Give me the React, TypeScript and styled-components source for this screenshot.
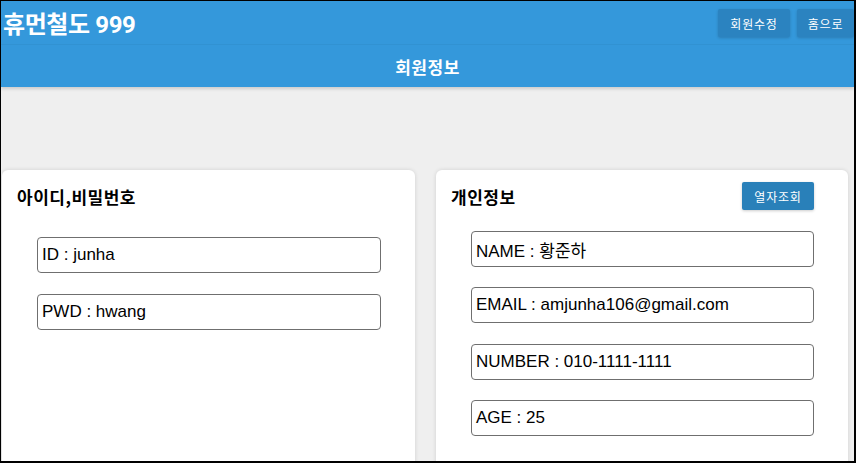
import React from "react";
import styled, { createGlobalStyle } from "styled-components";

const GlobalStyle = createGlobalStyle`
  html, body { margin: 0; padding: 0; background: #ffffff; }
  * { box-sizing: border-box; }
`;

const Frame = styled.div`
  width: 856px;
  height: 463px;
  border-style: solid;
  border-color: #000;
  border-width: 1px 2px 2px 1px;
  background: #efefef;
  overflow: hidden;
  display: flex;
  flex-direction: column;
  font-family: "Liberation Sans", "Noto Sans CJK KR", sans-serif;
`;

const Header = styled.header`
  background: #3498db;
  box-shadow: 0 2px 3px rgba(0, 0, 0, 0.15);
  position: relative;
  z-index: 1;
  flex-shrink: 0;
`;

const TopBar = styled.div`
  height: 44px;
  display: flex;
  align-items: center;
  justify-content: space-between;
  padding: 0 0 0 2px;
  border-bottom: 1px solid rgba(0, 0, 0, 0.04);
`;

const Brand = styled.h1`
  margin: 0;
  color: #fff;
  font-family: "Roboto", "Noto Sans CJK KR", sans-serif;
  font-size: 24px;
  font-weight: 700;
  letter-spacing: -0.4px;
`;

const NavButtons = styled.div`
  display: flex;
  gap: 7px;
  align-self: flex-start;
  margin-top: 8px;
`;

const NavButton = styled.button<{ $w: number }>`
  width: ${(p) => p.$w}px;
  height: 28px;
  border: none;
  border-radius: 2px;
  background: #2b83c0;
  color: #fff;
  font-family: "Noto Sans CJK KR", sans-serif;
  font-size: 12px;
  letter-spacing: 0.8px;
  box-shadow: 0 1px 3px rgba(0, 0, 0, 0.18);
  padding: 0;
  cursor: pointer;
`;

const SubBar = styled.div`
  height: 42px;
  display: flex;
  align-items: center;
  justify-content: center;
  color: #fff;
  font-family: "Noto Sans CJK KR", sans-serif;
  font-size: 17px;
  font-weight: 700;
  letter-spacing: 0.5px;
`;

const Main = styled.main`
  flex: 1;
  display: grid;
  grid-template-columns: 413px 412px;
  column-gap: 21px;
  padding: 83px 0 0 1px;
`;

const Card = styled.section`
  background: #fff;
  border-radius: 6px;
  box-shadow: 0 0 4px rgba(0, 0, 0, 0.13);
  height: 320px;
  padding: 12px 34px 0 15px;
`;

const CardHead = styled.div`
  height: 28px;
  display: flex;
  align-items: center;
  justify-content: space-between;
`;

const CardTitle = styled.h2`
  margin: 0;
  font-family: "Noto Sans CJK KR", sans-serif;
  font-size: 17px;
  font-weight: 700;
  letter-spacing: 0.5px;
  color: #000;
`;

const ActionButton = styled.button`
  width: 72px;
  height: 28px;
  border: none;
  border-radius: 2px;
  background: #2980b9;
  color: #fff;
  font-family: "Noto Sans CJK KR", sans-serif;
  font-size: 12px;
  letter-spacing: 0.8px;
  box-shadow: 0 1px 3px rgba(0, 0, 0, 0.2);
  padding: 0;
`;

const FieldList = styled.div<{ $top: number; $gap: number }>`
  display: flex;
  flex-direction: column;
  gap: ${(p) => p.$gap}px;
  margin: ${(p) => p.$top}px 0 0 20px;
`;

const Field = styled.div`
  height: 36px;
  border: 1px solid #6f6f6f;
  border-radius: 4px;
  display: flex;
  align-items: center;
  padding: 0 4px;
  font-family: "Liberation Sans", "Noto Sans CJK KR", sans-serif;
  font-size: 17px;
  color: #000;
  white-space: nowrap;
`;

export default function App() {
  return (
    <>
      <GlobalStyle />
      <Frame>
        <Header>
          <TopBar>
            <Brand>휴먼철도 999</Brand>
            <NavButtons>
              <NavButton $w={72}>회원수정</NavButton>
              <NavButton $w={57}>홈으로</NavButton>
            </NavButtons>
          </TopBar>
          <SubBar>회원정보</SubBar>
        </Header>
        <Main>
          <Card>
            <CardHead>
              <CardTitle>아이디,비밀번호</CardTitle>
            </CardHead>
            <FieldList $top={27} $gap={21}>
              <Field>ID : junha</Field>
              <Field>PWD : hwang</Field>
            </FieldList>
          </Card>
          <Card>
            <CardHead>
              <CardTitle>개인정보</CardTitle>
              <ActionButton>열자조회</ActionButton>
            </CardHead>
            <FieldList $top={21} $gap={20.4}>
              <Field>NAME : 황준하</Field>
              <Field>EMAIL : amjunha106@gmail.com</Field>
              <Field>NUMBER : 010-1111-1111</Field>
              <Field>AGE : 25</Field>
            </FieldList>
          </Card>
        </Main>
      </Frame>
    </>
  );
}
